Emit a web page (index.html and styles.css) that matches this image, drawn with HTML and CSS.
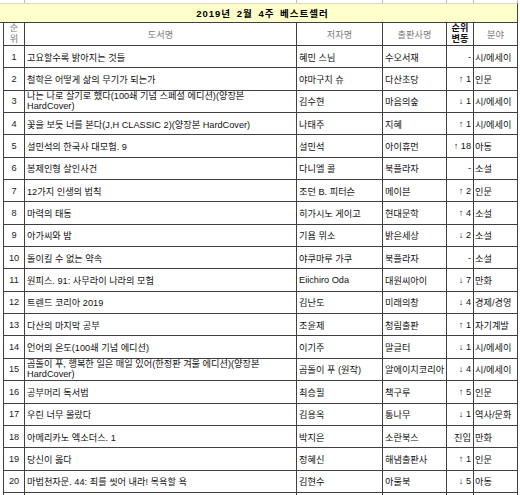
FILE: index.html
```html
<!DOCTYPE html>
<html lang="ko">
<head>
<meta charset="utf-8">
<title>2019년 2월 4주 베스트셀러</title>
<link rel="stylesheet" href="styles.css">
</head>
<body>
<div class="sheet">
  <div class="strip"></div><div class="strip"></div><div class="strip"></div><div class="strip"></div><div class="strip"></div><div class="strip"></div><div class="strip"></div>

  <div class="title">2019년 2월 4주 베스트셀러</div>

  <div class="edge"></div>
  <div class="hd hd-2">순<br>위</div>
  <div class="hd">도서명</div>
  <div class="hd">저자명</div>
  <div class="hd">출판사명</div>
  <div class="hd hd-2 hd-bold">순위<br>변동</div>
  <div class="hd">분야</div>

  <div class="edge"></div><div class="rk">1</div><div class="tx">고요할수록 밝아지는 것들</div><div class="tx">혜민 스님</div><div class="tx">수오서재</div><div class="ch">-</div><div class="tx fd">시/에세이</div>
  <div class="edge"></div><div class="rk">2</div><div class="tx">철학은 어떻게 삶의 무기가 되는가</div><div class="tx">야마구치 슈</div><div class="tx">다산초당</div><div class="ch">↑ 1</div><div class="tx fd">인문</div>
  <div class="edge"></div><div class="rk">3</div><div class="tx two">나는 나로 살기로 했다(100쇄 기념 스페셜 에디션)(양장본<br>HardCover)</div><div class="tx">김수현</div><div class="tx">마음의숲</div><div class="ch">↓ 1</div><div class="tx fd">시/에세이</div>
  <div class="edge"></div><div class="rk">4</div><div class="tx">꽃을 보듯 너를 본다(J,H CLASSIC 2)(양장본 HardCover)</div><div class="tx">나태주</div><div class="tx">지혜</div><div class="ch">↑ 1</div><div class="tx fd">시/에세이</div>
  <div class="edge"></div><div class="rk">5</div><div class="tx">설민석의 한국사 대모험. 9</div><div class="tx">설민석</div><div class="tx">아이휴먼</div><div class="ch">↑ 18</div><div class="tx fd">아동</div>
  <div class="edge"></div><div class="rk">6</div><div class="tx">봉제인형 살인사건</div><div class="tx">다니엘 콜</div><div class="tx">북플라자</div><div class="ch">-</div><div class="tx fd">소설</div>
  <div class="edge"></div><div class="rk">7</div><div class="tx">12가지 인생의 법칙</div><div class="tx">조던 B. 피터슨</div><div class="tx">메이븐</div><div class="ch">↑ 2</div><div class="tx fd">인문</div>
  <div class="edge"></div><div class="rk">8</div><div class="tx">마력의 태동</div><div class="tx">히가시노 게이고</div><div class="tx">현대문학</div><div class="ch">↑ 4</div><div class="tx fd">소설</div>
  <div class="edge"></div><div class="rk">9</div><div class="tx">아가씨와 밤</div><div class="tx">기욤 뮈소</div><div class="tx">밝은세상</div><div class="ch">↓ 2</div><div class="tx fd">소설</div>
  <div class="edge"></div><div class="rk">10</div><div class="tx">돌이킬 수 없는 약속</div><div class="tx">야쿠마루 가쿠</div><div class="tx">북플라자</div><div class="ch">-</div><div class="tx fd">소설</div>
  <div class="edge"></div><div class="rk">11</div><div class="tx">원피스. 91: 사무라이 나라의 모험</div><div class="tx">Eiichiro Oda</div><div class="tx">대원씨아이</div><div class="ch">↓ 7</div><div class="tx fd">만화</div>
  <div class="edge"></div><div class="rk">12</div><div class="tx">트렌드 코리아 2019</div><div class="tx">김난도</div><div class="tx">미래의창</div><div class="ch">↓ 4</div><div class="tx fd">경제/경영</div>
  <div class="edge"></div><div class="rk">13</div><div class="tx">다산의 마지막 공부</div><div class="tx">조윤제</div><div class="tx">청림출판</div><div class="ch">↑ 1</div><div class="tx fd">자기계발</div>
  <div class="edge"></div><div class="rk">14</div><div class="tx">언어의 온도(100쇄 기념 에디션)</div><div class="tx">이기주</div><div class="tx">말글터</div><div class="ch">↓ 1</div><div class="tx fd">시/에세이</div>
  <div class="edge"></div><div class="rk">15</div><div class="tx two">곰돌이 푸, 행복한 일은 매일 있어(한정판 겨울 에디션)(양장본<br>HardCover)</div><div class="tx">곰돌이 푸 (원작)</div><div class="tx">알에이치코리아</div><div class="ch">↓ 4</div><div class="tx fd">시/에세이</div>
  <div class="edge"></div><div class="rk">16</div><div class="tx">공부머리 독서법</div><div class="tx">최승필</div><div class="tx">책구루</div><div class="ch">↑ 5</div><div class="tx fd">인문</div>
  <div class="edge"></div><div class="rk">17</div><div class="tx">우린 너무 몰랐다</div><div class="tx">김용옥</div><div class="tx">통나무</div><div class="ch">↓ 1</div><div class="tx fd">역사/문화</div>
  <div class="edge"></div><div class="rk">18</div><div class="tx">아메리카노 엑소더스. 1</div><div class="tx">박지은</div><div class="tx">소란북스</div><div class="ch">진입</div><div class="tx fd">만화</div>
  <div class="edge"></div><div class="rk">19</div><div class="tx">당신이 옳다</div><div class="tx">정혜신</div><div class="tx">해냄출판사</div><div class="ch">↑ 1</div><div class="tx fd">인문</div>
  <div class="edge"></div><div class="rk">20</div><div class="tx">마법천자문. 44: 죄를 씻어 내라! 목욕할 욕</div><div class="tx">김현수</div><div class="tx">아울북</div><div class="ch">↓ 5</div><div class="tx fd">아동</div>

  <div class="edge tail"></div><div class="tail"></div><div class="tail"></div><div class="tail"></div><div class="tail"></div><div class="tail"></div><div class="tail"></div>
</div>
</body>
</html>
```

FILE: styles.css
```css
html, body {
  margin: 0;
  padding: 0;
  background: #ffffff;
}

body {
  width: 520px;
  height: 495px;
  overflow: hidden;
  font-family: "Liberation Sans", "Noto Sans CJK KR", sans-serif;
  font-size: 9.2px;
  color: #111;
}

.sheet {
  display: grid;
  grid-template-columns: 4px 21px 272px 86px 64px 27px 44px;
  grid-template-rows: 3px 20px 23px repeat(20, 22.35px) 10px;
  width: 518px;
}

.sheet > div {
  box-sizing: border-box;
  border-right: 1px solid #404040;
  border-bottom: 1px solid #404040;
  overflow: hidden;
  white-space: nowrap;
}

.sheet > .strip {
  border-bottom: none;
  border-right-color: #bdbdbd;
}

.sheet > .strip:first-child {
  border-right: none;
}

.sheet > .title {
  grid-column: 1 / -1;
  background: #ffffcc;
  font-weight: bold;
  font-size: 9.5px;
  letter-spacing: 1px;
  word-spacing: 2px;
  color: #000;
  display: flex;
  align-items: center;
  justify-content: center;
  padding-left: 8px;
  border-top: 1px solid #d8d8c0;
}

.sheet > .edge {
  border-bottom: none;
}

.sheet > .tail {
  border-bottom: none;
}

.hd {
  display: flex;
  align-items: center;
  justify-content: center;
  text-align: center;
  color: #7a7a7a;
}

.hd-2 {
  line-height: 11px;
}

.hd-bold {
  color: #111;
  font-weight: bold;
}

.rk {
  display: flex;
  align-items: center;
  justify-content: center;
  color: #222;
}

.tx {
  display: flex;
  align-items: center;
  padding-left: 2px;
  color: #111;
}

.tx.two {
  line-height: 10px;
  white-space: normal;
}

.tx.fd {
  padding-left: 1px;
}

.ch {
  display: flex;
  align-items: center;
  justify-content: flex-end;
  padding-right: 2px;
  color: #111;
}
```
